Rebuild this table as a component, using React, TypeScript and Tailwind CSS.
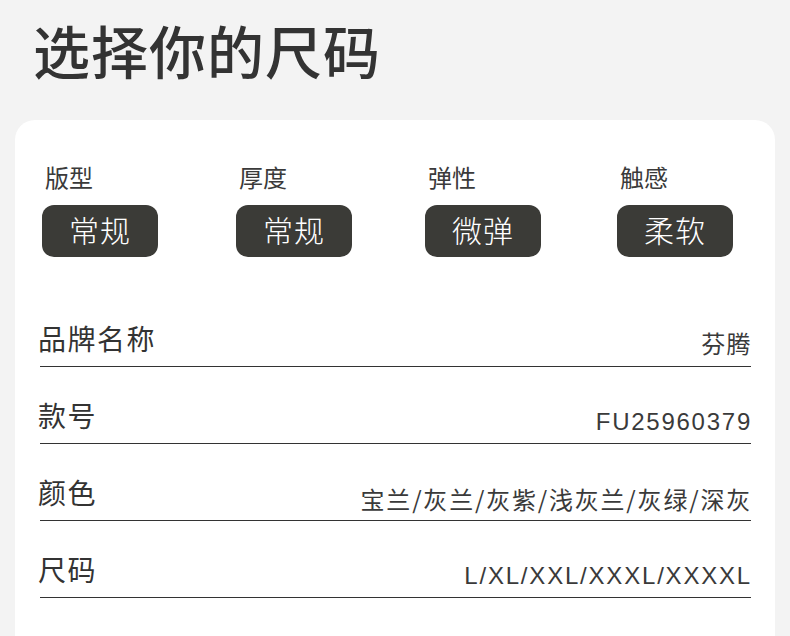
import React from 'react';

const CJK = "font-['Liberation_Sans','Noto_Sans_CJK_SC',sans-serif]";

const specs = [
  { label: '版型', value: '常规' },
  { label: '厚度', value: '常规' },
  { label: '弹性', value: '微弹' },
  { label: '触感', value: '柔软' },
];

const rows = [
  { label: '品牌名称', value: '芬腾', track: 'tracking-[1.4px]' },
  { label: '款号', value: 'FU25960379', track: 'tracking-[1.75px]' },
  { label: '颜色', value: '宝兰/灰兰/灰紫/浅灰兰/灰绿/深灰', track: "tracking-[1.8px] font-['Noto_Sans_CJK_SC',sans-serif]" },
  { label: '尺码', value: 'L/XL/XXL/XXXL/XXXXL', track: 'tracking-[1.8px]' },
];

export default function App() {
  return (
    <div className={`w-[790px] h-[636px] overflow-hidden bg-[#f3f3f3] text-[#333] ${CJK}`}>
      <h1 className="pt-[26px] pl-[33px] text-[57px] leading-[57px] font-medium tracking-[1px] text-[#333]">
        选择你的尺码
      </h1>

      <div className="mt-[37px] mx-[15px] bg-white rounded-[20px] h-[600px] px-[24px] pt-[43px]">
        <div className="grid grid-cols-[194px_189px_192px_116px] pl-[3px]">
          {specs.map((s, i) => (
            <div key={i} className="flex flex-col">
              <span className="text-[24px] leading-[32px] pl-[3px] text-[#3a3a3a]">{s.label}</span>
              <div className="mt-[10px] w-[116px] h-[52px] rounded-[12px] bg-[#3b3b37] flex items-center justify-center text-white text-[30px] tracking-[1px] font-light">
                {s.value}
              </div>
            </div>
          ))}
        </div>

        <div className="mt-[33px] pl-[1px]">
          {rows.map((r, i) => (
            <div
              key={i}
              className="h-[77px] flex items-end justify-between border-b border-[#333] pb-[5px]"
            >
              <span className="text-[28px] leading-[40px] tracking-[1.5px] -ml-[2px] text-[#333]">{r.label}</span>
              <span className={`text-[24px] leading-[32px] ${r.track} -mr-[1px] text-[#3a3a3a]`}>{r.value}</span>
            </div>
          ))}
        </div>
      </div>
    </div>
  );
}
